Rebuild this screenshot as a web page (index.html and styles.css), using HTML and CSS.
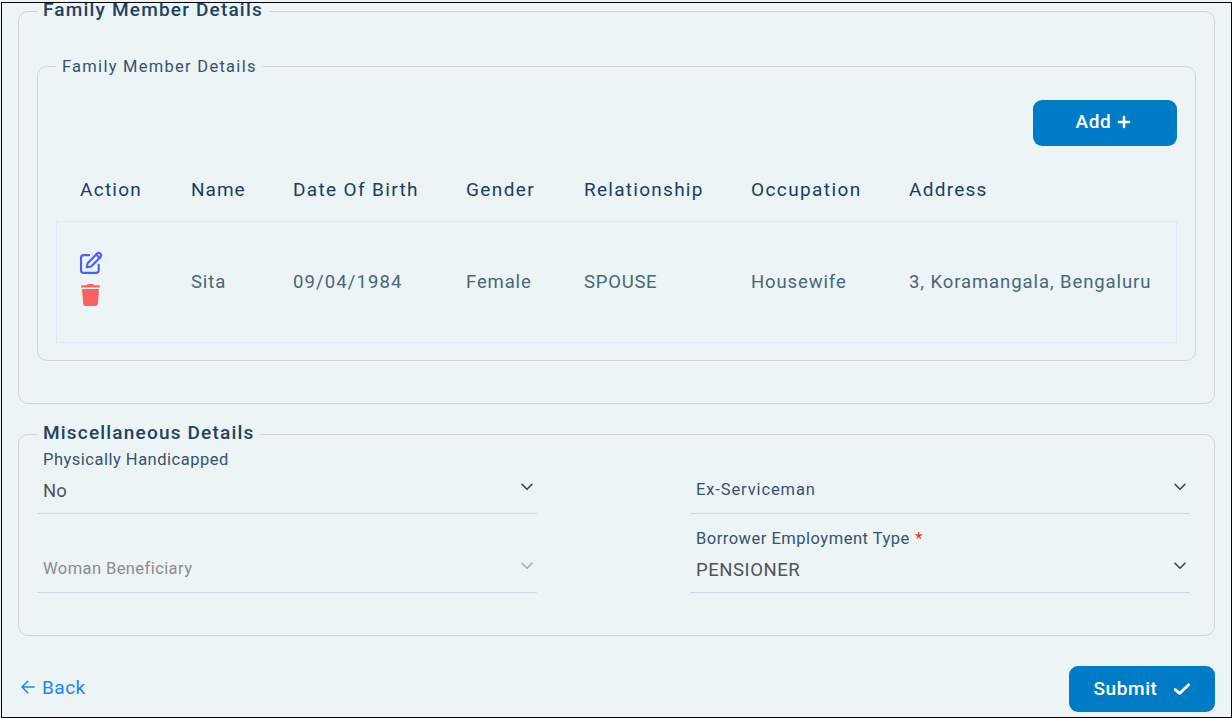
FILE: index.html
```html
<!DOCTYPE html>
<html lang="en">
<head>
<meta charset="utf-8">
<title>Family Member Details</title>
<link rel="stylesheet" href="styles.css">
</head>
<body>
<main class="frame">
  <fieldset class="group family">
    <legend class="title">Family Member Details</legend>
    <fieldset class="group members">
      <legend class="subtitle">Family Member Details</legend>
      <div class="toolbar">
        <button class="btn add"><span>Add</span><svg width="14" height="14" viewBox="0 0 14 14"><path d="M7 1.9v10.2M1.9 7h10.2" stroke="#fff" stroke-width="2.5" stroke-linecap="round"/></svg></button>
      </div>
      <div class="row head">
        <span>Action</span><span class="name">Name</span><span class="dob">Date Of Birth</span><span class="gender">Gender</span><span>Relationship</span><span class="occupation">Occupation</span><span>Address</span>
      </div>
      <div class="row body">
        <div class="actions">
          <svg width="24" height="24" viewBox="0 0 24 24" fill="none" stroke="#4361ff" stroke-width="2.1" stroke-linecap="round" stroke-linejoin="round"><path d="M10.2 4.1H4.7Q2 4.1 2 6.8V19.2Q2 21.9 4.7 21.9H17Q19.7 21.9 19.7 19.2V13.7"/><path d="M7.8 16.3L8.6 12.2L17.7 2.9Q19.5 1.1 21.4 2.6Q23 4.4 21.3 6.3L12.1 15.5Z"/><path d="M17.2 3.6L20.6 7"/></svg>
          <svg width="24" height="24" viewBox="0 0 24 24" fill="#fa6262"><path d="M2 3.1Q2 2.2 3 2.2H7.4L8.6 1H14L15.2 2.2H19.8Q20.8 2.2 20.8 3.1V4.5H2Z"/><path d="M3 6.1H20L18.9 21.1Q18.7 23 16.9 23H6.2Q4.4 23 4.2 21.1Z"/></svg>
        </div>
        <span>Sita</span><span class="date">09/04/1984</span><span>Female</span><span class="relation">SPOUSE</span><span>Housewife</span><span class="address">3, Koramangala, Bengaluru</span>
      </div>
    </fieldset>
  </fieldset>

  <fieldset class="group misc">
    <legend class="title">Miscellaneous Details</legend>
    <div class="fields">
      <div class="field">
        <div class="label">Physically Handicapped</div>
        <div class="value">No</div>
        <svg class="chevron" width="14" height="8" viewBox="0 0 14 8"><path d="M2 1.3L7 6.2L12 1.3"/></svg>
      </div>
      <div class="field">
        <div class="label placeholder wide">Ex-Serviceman</div>
        <svg class="chevron" width="14" height="8" viewBox="0 0 14 8"><path d="M2 1.3L7 6.2L12 1.3"/></svg>
      </div>
      <div class="field disabled">
        <div class="label placeholder">Woman Beneficiary</div>
        <svg class="chevron" width="14" height="8" viewBox="0 0 14 8"><path d="M2 1.3L7 6.2L12 1.3"/></svg>
      </div>
      <div class="field">
        <div class="label">Borrower Employment Type <span class="required">*</span></div>
        <div class="value upper">PENSIONER</div>
        <svg class="chevron" width="14" height="8" viewBox="0 0 14 8"><path d="M2 1.3L7 6.2L12 1.3"/></svg>
      </div>
    </div>
  </fieldset>

  <footer class="footer">
    <a class="back"><svg width="14" height="14" viewBox="0 0 14 14" fill="none" stroke="#1685ff" stroke-width="1.5" stroke-linecap="round" stroke-linejoin="round"><path d="M13 7H1.2M6.8 1.2L1 7L6.8 12.8"/></svg><span>Back</span></a>
    <button class="btn submit"><span>Submit</span><svg width="18" height="14" viewBox="0 0 18 14" fill="none" stroke="#fff" stroke-width="2.8" stroke-linecap="round" stroke-linejoin="round"><path d="M2.2 7.6L6.6 11.4L15.6 2.8"/></svg></button>
  </footer>
</main>
</body>
</html>
```
FILE: styles.css
```css
* { box-sizing: border-box; }
body { margin: 0; background: #ecf4f6; font-family: Roboto, "Liberation Sans", sans-serif; height: 718px; overflow: hidden; padding: 2px 0 0 1px; }
.frame { width: 1231px; height: 716px; border: 1px solid #000; overflow: hidden; padding: 0 16px; background: #ecf4f6; }
.group { min-width: 0; margin: 0; padding: 0 18px; border: 1px solid #d3d3d6; border-radius: 10px; }
legend { padding: 0 6px; white-space: nowrap; }
.title { height: 23px; line-height: 20px; font-size: 19px; font-weight: 500; color: #1d4362; letter-spacing: 1.19px; }
.subtitle { height: 21px; line-height: 21px; font-size: 16.5px; color: #34536e; letter-spacing: 1.27px; }
.family { margin-top: -3px; height: 404px; }
.members { margin-top: 33px; height: 305px; }
.misc { margin-top: 19px; height: 213px; }
.toolbar { display: flex; justify-content: flex-end; padding-top: 23px; }
.btn { border: 0; border-radius: 9px; background: #007cc7; color: #fff; font: 500 19px/1 Roboto, sans-serif; height: 46px; padding: 0 0 3px; display: flex; align-items: center; justify-content: center; }
.add { width: 144px; gap: 6px; padding-right: 3px; letter-spacing: 0.6px; }
.row { display: grid; grid-template-columns: 111px 102px 173px 118px 167px 158px 1fr; align-items: center; white-space: nowrap; padding-left: 24px; }
.head { height: 75px; padding-top: 11px; font-size: 19px; color: #173e66; letter-spacing: 1.27px; }
.name { letter-spacing: 1px; }
.dob { letter-spacing: 1.35px; }
.gender, .occupation { letter-spacing: 1.4px; }
.body { height: 122px; padding-left: 23px; border: 1px solid #dfe8f7; font-size: 18.5px; color: #466878; letter-spacing: 0.87px; }
.date { letter-spacing: 1.1px; }
.relation { letter-spacing: 0.75px; }
.address { letter-spacing: 0.92px; }
.actions { display: flex; flex-direction: column; gap: 8px; margin-left: -1px; padding-bottom: 7px; }
.fields { display: grid; grid-template-columns: 500px 500px; column-gap: 153px; grid-template-rows: 68px 79px; }
.field { position: relative; border-bottom: 1px solid #cfd8e2; padding-left: 6px; display: flex; flex-direction: column; justify-content: flex-end; padding-bottom: 10px; }
.label { font-size: 16.5px; line-height: 20px; color: #34536e; letter-spacing: 0.5px; }
.value { font-size: 18.5px; line-height: 24px; margin-top: 9px; color: #505258; }
.upper { letter-spacing: 0.55px; }
.placeholder { padding-bottom: 3px; height: 23px; }
.wide { letter-spacing: 0.88px; }
.chevron { position: absolute; right: 3px; bottom: 22px; fill: none; stroke: #3b4148; stroke-width: 1.6; stroke-linecap: round; stroke-linejoin: round; }
.disabled .chevron { stroke: #a7acaf; }
.disabled .label { color: #8a8c8e; letter-spacing: 0.42px; }
.required { color: #ff2020; margin-left: 1px; }
.footer { margin-top: 30px; display: flex; justify-content: space-between; align-items: center; }
.back { display: flex; align-items: center; gap: 7px; padding: 0 0 4px 3px; color: #1685ff; font-size: 19px; letter-spacing: 0.5px; }
.back span { line-height: 24px; padding-top: 2px; }
.submit { width: 146px; gap: 15px; padding-bottom: 1px; letter-spacing: 0.6px; }
```
